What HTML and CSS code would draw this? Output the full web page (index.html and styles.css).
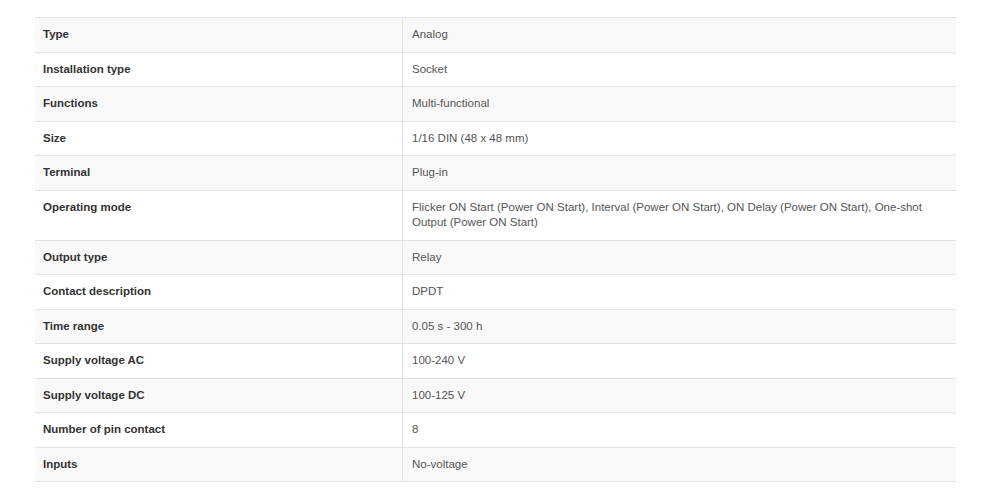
FILE: index.html
```html
<!DOCTYPE html>
<html lang="en">
<head>
<meta charset="utf-8">
<title>Specifications</title>
<link rel="stylesheet" href="styles.css">
</head>
<body>
<div class="wrap">
<table class="specs">
<tbody>
<tr><th>Type</th><td>Analog</td></tr>
<tr><th>Installation type</th><td>Socket</td></tr>
<tr><th>Functions</th><td>Multi-functional</td></tr>
<tr><th>Size</th><td>1/16 DIN (48 x 48 mm)</td></tr>
<tr><th>Terminal</th><td>Plug-in</td></tr>
<tr><th>Operating mode</th><td>Flicker ON Start (Power ON Start), Interval (Power ON Start), ON Delay (Power ON Start), One-shot Output (Power ON Start)</td></tr>
<tr><th>Output type</th><td>Relay</td></tr>
<tr><th>Contact description</th><td>DPDT</td></tr>
<tr><th>Time range</th><td>0.05 s - 300 h</td></tr>
<tr><th>Supply voltage AC</th><td>100-240 V</td></tr>
<tr><th>Supply voltage DC</th><td>100-125 V</td></tr>
<tr><th>Number of pin contact</th><td>8</td></tr>
<tr><th>Inputs</th><td>No-voltage</td></tr>
</tbody>
</table>
</div>
</body>
</html>
```
FILE: styles.css
```css
html, body {
  margin: 0;
  padding: 0;
  background: #ffffff;
}
.wrap {
  padding: 17px 43px 0 35px;
}
.specs {
  width: 921px;
  border-collapse: collapse;
  font-family: "Liberation Sans", Arial, sans-serif;
  font-size: 11.5px;
  line-height: 15.5px;
  border-top: 1px solid #e3e3e3;
}
.specs tr:nth-child(odd) {
  background: #f9f9f9;
}
.specs th, .specs td {
  padding: 9px 8px;
  border-bottom: 1px solid #e3e3e3;
  vertical-align: top;
  text-align: left;
}
.specs th {
  width: 351px;
  font-weight: bold;
  color: #333333;
  border-right: 1px solid #e3e3e3;
}
.specs td {
  color: #555555;
  padding-left: 9px;
  padding-right: 8px;
}
```
